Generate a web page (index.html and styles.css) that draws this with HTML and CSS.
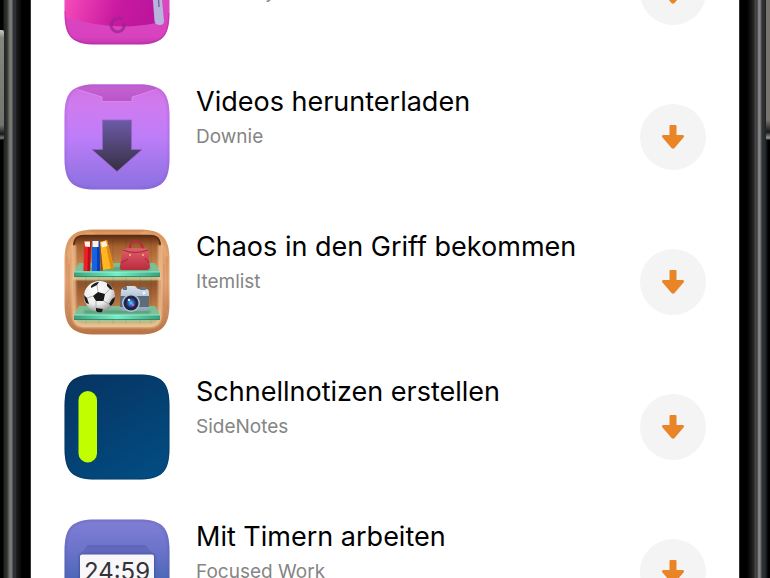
FILE: index.html
```
<!DOCTYPE html>
<html lang="de">
<head>
<meta charset="utf-8">
<meta name="viewport" content="width=device-width, initial-scale=1">
<title>Apps</title>
<link rel="stylesheet" href="styles.css">
</head>
<body>
<svg class="defs" aria-hidden="true">
  <defs>
    <clipPath id="tile"><path d="M.5 32C.5 8 8 .5 32 .5H74C98 .5 105.500 8 105.500 32V74C105.500 98 98 105.500 74 105.500H32C8 105.500 .5 98 .5 74Z"/></clipPath>
    <filter id="soft" x="-30%" y="-30%" width="160%" height="160%"><feGaussianBlur stdDeviation="1"/></filter>
    <filter id="glow" x="-30%" y="-80%" width="160%" height="260%"><feGaussianBlur stdDeviation="3"/></filter>
    <symbol id="arrow" viewBox="0 0 24 26"><path d="M9.500 1H14.500Q15.500 1 15.500 2V11H21.500Q24 11.500 22.500 13.500L13.500 24Q12 25.500 10.500 24L1.500 13.500Q0 11.500 2.500 11H8.500V2Q8.500 1 9.500 1Z" fill="#e98427"/></symbol>
  </defs>
</svg>
<div class="phone">
  <div class="side side-left"><div class="key key-left"></div></div>
  <main class="screen">
    <ul class="apps">
      <li class="app">
        <svg class="icon" viewBox="0 0 106 106" aria-hidden="true">
          <defs>
            <linearGradient id="pink" x1="0" y1=".5" x2="1" y2=".8"><stop offset="0" stop-color="#fb50bd"/><stop offset=".6" stop-color="#c91aa0"/><stop offset="1" stop-color="#ba159c"/></linearGradient>
            <linearGradient id="base" x1="0" y1="0" x2="0" y2="1"><stop offset="0" stop-color="#e04fc4"/><stop offset=".92" stop-color="#d842bf"/><stop offset="1" stop-color="#c336b0"/></linearGradient>
          </defs>
          <g clip-path="url(#tile)">
            <path d="M0 0H106V106H0Z" fill="url(#base)"/>
            <path d="M1 0H90L92 84Q50 93 1 78Z" fill="url(#pink)"/>
            <path d="M88 50H97L100 82Q100 86 96 86Q91 86 90.500 82Z" fill="#b9b4dc"/>
            <path d="M94 50L95 68" stroke="#625b99" stroke-width="1.200"/>
            <path d="M52 80A6.500 6.500 0 1 0 60 85M55 79L57 80" fill="none" stroke="#94258c" stroke-width="3" stroke-linecap="round" opacity=".7"/>
            <path d="M1 72C1 98 8 104.500 32 104.500H74C98 104.500 105 98 105 74" fill="none" stroke="#b32ba6" stroke-width="1.500" opacity=".5"/>
          </g>
        </svg>
        <div class="text"><div class="title"></div><p class="name">CleanMyMac</p></div>
        <button class="get" aria-label="Laden"><svg class="arrow" aria-hidden="true"><use href="#arrow"/></svg></button>
      </li>
      <li class="app">
        <svg class="icon" viewBox="0 0 106 106" aria-hidden="true">
          <defs>
            <linearGradient id="violet" x1="0" y1="0" x2="0" y2="1"><stop offset="0" stop-color="#d070e2"/><stop offset=".2" stop-color="#d07bf0"/><stop offset=".5" stop-color="#bd7df8"/><stop offset="1" stop-color="#8a70e0"/></linearGradient>
            <linearGradient id="flap" x1="0" y1="0" x2="0" y2="1"><stop offset="0" stop-color="#c765d6"/><stop offset="1" stop-color="#b955c6"/></linearGradient>
            <linearGradient id="dark" x1="0" y1="0" x2="0" y2="1"><stop offset="0" stop-color="#6d5ba8"/><stop offset="1" stop-color="#352f42"/></linearGradient>
          </defs>
          <g clip-path="url(#tile)">
            <path d="M0 0H106V106H0Z" fill="url(#violet)"/>
            <path d="M12 5L24 0H82L94 5L68 13V17.500H38V13Z" fill="url(#flap)"/>
            <path d="M12 5L38 13V17.500H68V13L94 5" fill="none" stroke="#df93f2" stroke-width=".7"/>
            <path d="M38.500 36H67.500V65.500H78L53 87.500L28 65.500H38.500Z" fill="url(#dark)" stroke="#965fc9" stroke-width=".8"/>
            <path d="M1 32C1 8 8 1 32 1H74C98 1 105 8 105 32V74C105 98 98 105 74 105H32C8 105 1 98 1 74Z" fill="none" stroke="#8851ba" stroke-width="2" opacity=".35" filter="url(#soft)"/>
          </g>
        </svg>
        <div class="text"><h2 class="title">Videos herunterladen</h2><p class="name">Downie</p></div>
        <button class="get" aria-label="Videos herunterladen: Downie laden"><svg class="arrow" aria-hidden="true"><use href="#arrow"/></svg></button>
      </li>
      <li class="app">
        <svg class="icon" viewBox="0 0 106 106" aria-hidden="true">
          <defs>
            <linearGradient id="wood" x1="0" y1="0" x2="0" y2="1"><stop offset="0" stop-color="#d9955e"/><stop offset=".5" stop-color="#e6a777"/><stop offset="1" stop-color="#b87345"/></linearGradient>
            <linearGradient id="inside" x1="0" y1="0" x2="0" y2="1"><stop offset="0" stop-color="#5a2b13"/><stop offset=".12" stop-color="#a5602f"/><stop offset=".35" stop-color="#c8864f"/><stop offset=".48" stop-color="#e6b681"/><stop offset=".5" stop-color="#8a4f28"/><stop offset=".75" stop-color="#b87441"/><stop offset="1" stop-color="#e8b788"/></linearGradient>
            <linearGradient id="glass" x1="0" y1="0" x2="1" y2="0"><stop offset="0" stop-color="#38a17d"/><stop offset=".5" stop-color="#70f0ca"/><stop offset="1" stop-color="#38a17d"/></linearGradient>
            <linearGradient id="bag" x1="0" y1="0" x2="0" y2="1"><stop offset="0" stop-color="#e0606c"/><stop offset="1" stop-color="#b92b3d"/></linearGradient>
            <radialGradient id="ball" cx=".4" cy=".3" r=".75"><stop offset="0" stop-color="#fff"/><stop offset=".6" stop-color="#ececec"/><stop offset="1" stop-color="#888"/></radialGradient>
            <linearGradient id="metal" x1="0" y1="0" x2="0" y2="1"><stop offset="0" stop-color="#d5e2ef"/><stop offset="1" stop-color="#8fa3b8"/></linearGradient>
            <radialGradient id="lens"><stop offset="0" stop-color="#61d7f7"/><stop offset=".45" stop-color="#2868c4"/><stop offset=".8" stop-color="#31225d"/><stop offset="1" stop-color="#151d2e"/></radialGradient>
          </defs>
          <g clip-path="url(#tile)">
            <path d="M0 0H106V106H0Z" fill="url(#wood)"/>
            <path d="M5 30Q5 5 30 5M102 28Q100 5 76 4" fill="none" stroke="#f1bd91" stroke-width="2" opacity=".6" filter="url(#soft)"/>
            <path d="M3 27V80M5 35V75M103 27V80M100 35V78M20 100H83M28 103H79M25 2H80" stroke="#ad6d40" stroke-width=".7" opacity=".5"/>
            <rect x="9" y="6" width="88" height="92" rx="10" fill="url(#inside)"/>
            <path d="M22 8V95M35 8V95M49 8V95M62 8V95M76 8V95M87 8V95" stroke="#54290f" stroke-width=".6" opacity=".25"/>
            <path d="M10 16V88Q11 97 20 97H86Q95 97 96 88V16" fill="none" stroke="#f4c497" stroke-width="4" filter="url(#soft)" opacity=".8"/>
            <path d="M10 16Q10 6.500 20 6.500H86Q96 6.500 96 16" fill="none" stroke="#5b2c12" stroke-width="1.500"/>
            <path d="M14 39H92V49H14ZM14 82H92V92H14Z" fill="#60f4bd" opacity=".65" filter="url(#glow)"/>
            <path d="M15 34H91L96 43H10ZM15 77H91L96 86H10Z" fill="#76c39c" opacity=".9"/>
            <path d="M20 40H86M20 83H86" stroke="#2b7a58" stroke-width="3" opacity=".5" filter="url(#soft)"/>
            <path d="M10 43H96V47.500H10ZM10 86H96V90.500H10Z" fill="url(#glass)"/>
            <path d="M10 43H96M10 86H96" stroke="#b2f9db" stroke-width=".7"/>
            <path d="M10 47.500H96M10 90.500H96" stroke="#286e4b" stroke-width=".7"/>
            <path d="M20 12L27 13L26 42H19.500Z" fill="#ec2029"/><path d="M24 13H27L26 42H23.500Z" fill="#b60f1b"/>
            <path d="M28 12H35.500L36 42H28Z" fill="#1762df"/><path d="M33 13H35.500L36 42H33Z" fill="#0a3db6"/>
            <path d="M36 13L43 11L50 39L38.500 41Z" fill="#ffb625"/><path d="M36 13L39 41.500L36.500 42Z" fill="#8a4d22"/><path d="M41 12L43 11L50 39L47 41Z" fill="#e28b0b"/>
            <path d="M20.500 12.500H26V18L21 17.500ZM28.500 12H34.500V18H28.500ZM37 13.500L42 12L43.500 17L38 18.500Z" fill="#fff3df"/>
            <path d="M66 27V19Q66 12 72 12Q78 12 79 20V27" fill="none" stroke="#b32d3d" stroke-width="2.200"/>
            <path d="M59 20Q72 18 84 20L86 38Q86 40 83 41H58Q55 41 56 37Z" fill="url(#bag)"/>
            <path d="M59 21Q71 26 84 21M57 34L64 30M85 34L81 29" stroke="#98243a" stroke-width=".9" fill="none"/>
            <circle cx="66" cy="26" r="1" fill="#f5be80"/><circle cx="79" cy="26" r="1" fill="#f5be80"/>
            <circle cx="35.500" cy="67.500" r="15.500" fill="url(#ball)"/>
            <path d="M34 63L41 65L39.500 72H32L29 67ZM27 57Q31 53 35 53L33 56L27 59ZM43 54Q47 56 49 61L46 60L43 57ZM20 66L23 69L25 75L22 74Q20 70 20 66ZM51 68Q51 73 47 77L45 75L48 70ZM32 79L39 80L38 83Q34 84 32 82Z" fill="#1b1b1b"/>
            <path d="M34 63L33 56M41 65L46 60M39.500 72L45 75M32 72L32 79M29 67L23 69" stroke="#999" stroke-width=".7"/>
            <path d="M57 62Q57 59 61 59L63 57H71L74 60H82Q85 60 85 64V79Q85 82 81 82H60Q56 82 56 78Z" fill="url(#metal)"/>
            <path d="M56 67H85V78H56Z" fill="#5d6c7d"/>
            <path d="M59 58H63V61H59ZM76 58H82V61H76Z" fill="#65768b"/>
            <circle cx="67" cy="74" r="9" fill="#b4c4d4"/><circle cx="67" cy="74" r="7.500" fill="#1e2a3f"/><circle cx="67" cy="74" r="6" fill="url(#lens)"/>
            <circle cx="65" cy="71" r="1.300" fill="#bff6ff"/><circle cx="69" cy="76" r="1.300" fill="#ba62e3"/><circle cx="80" cy="64" r="1.500" fill="#f5f8ff"/>
          </g>
        </svg>
        <div class="text"><h2 class="title">Chaos in den Griff bekommen</h2><p class="name">Itemlist</p></div>
        <button class="get" aria-label="Chaos in den Griff bekommen: Itemlist laden"><svg class="arrow" aria-hidden="true"><use href="#arrow"/></svg></button>
      </li>
      <li class="app">
        <svg class="icon" viewBox="0 0 106 106" aria-hidden="true">
          <defs><linearGradient id="navy" x1=".2" y1="0" x2=".8" y2="1"><stop offset="0" stop-color="#063563"/><stop offset="1" stop-color="#024c82"/></linearGradient></defs>
          <g clip-path="url(#tile)">
            <path d="M0 0H106V106H0Z" fill="url(#navy)"/>
            <rect x="14.500" y="17" width="18.500" height="71.500" rx="9.200" fill="#c1ff00"/>
            <path d="M1 32C1 8 8 1 32 1H74C98 1 105 8 105 32V74C105 98 98 105 74 105H32C8 105 1 98 1 74Z" fill="none" stroke="#07315a" opacity=".5"/>
          </g>
        </svg>
        <div class="text"><h2 class="title">Schnellnotizen erstellen</h2><p class="name">SideNotes</p></div>
        <button class="get" aria-label="Schnellnotizen erstellen: SideNotes laden"><svg class="arrow" aria-hidden="true"><use href="#arrow"/></svg></button>
      </li>
      <li class="app">
        <svg class="icon" viewBox="0 0 106 106" aria-hidden="true">
          <defs><linearGradient id="indigo" x1="0" y1="0" x2="0" y2="1"><stop offset="0" stop-color="#827ed6"/><stop offset=".3" stop-color="#6b73c9"/><stop offset=".55" stop-color="#4f68b9"/><stop offset="1" stop-color="#3e559f"/></linearGradient></defs>
          <g clip-path="url(#tile)">
            <path d="M0 0H106V106H0Z" fill="url(#indigo)"/>
            <path d="M23 27H82L91 37H15Z" fill="#4f59a9" opacity=".4"/>
            <path d="M23 27H82" stroke="#565ba9" stroke-width="1"/>
            <rect x="15" y="35" width="76" height="60" rx="3" fill="#3c4a95" opacity=".7" filter="url(#soft)"/>
            <rect x="16" y="35.500" width="74" height="60" rx="2" fill="#f8f8fb"/>
            <text class="clock" x="53" y="61" text-anchor="middle">24:59</text>
            <path d="M1 74V32C1 8 8 1 32 1H74C98 1 105 8 105 32V74" fill="none" stroke="#555aa7" stroke-width="2" opacity=".4" filter="url(#soft)"/>
          </g>
        </svg>
        <div class="text"><h2 class="title">Mit Timern arbeiten</h2><p class="name">Focused Work</p></div>
        <button class="get" aria-label="Mit Timern arbeiten: Focused Work laden"><svg class="arrow" aria-hidden="true"><use href="#arrow"/></svg></button>
      </li>
    </ul>
  </main>
  <div class="side side-right"><div class="key key-right"></div></div>
</div>
</body>
</html>
```
FILE: styles.css
```
* { box-sizing: border-box; }

body {
  margin: 0;
  background: #000;
  color: #000;
  font-family: Inter, "Liberation Sans", sans-serif;
}

.defs {
  position: absolute;
  width: 0;
  height: 0;
}

.phone {
  display: grid;
  grid-template-columns: 31px 1fr 31px;
  height: 100vh;
  overflow: hidden;
}

.side { display: flex; }

.side-left {
  background: linear-gradient(90deg, #000 0 3px, #222 4px, #303132 7px, #4a4b49 8px, #7b7d74 10px, #74766e 12px, #303444 13px, #252830 14px, #3c3d40 15px, #202020 16px, #111 19px, #000 22px 30px, #666 31px);
}

.side-right {
  justify-content: flex-end;
  background: linear-gradient(90deg, #666 0, #000 1px 8px, #151515 12px, #292929 15px, #565656 17px, #222 18px, #808080 19px, #858585 21px, #303334 23px, #272c2f 26px, #111 28px, #000 29px);
}

.key { width: 4px; }

.key-left {
  height: 110px;
  margin-top: 30px;
  border-radius: 0 2px 2px 0;
  background: linear-gradient(180deg, #c8c8c4, #858680 8px, #74756f 95px, #161616 104px, #777 108px, #111);
}

.key-right {
  height: 140px;
  background: linear-gradient(180deg, #77736d, #77736d 120px, #181818 132px, #999 138px, #111);
}

.screen {
  overflow: hidden;
  background: #fff;
}

.apps {
  display: flex;
  flex-direction: column;
  gap: 39px;
  margin: -61px 0 0;
  padding: 0 33px;
  list-style: none;
}

.app {
  display: flex;
  align-items: center;
  gap: 26px;
}

.icon {
  flex: none;
  width: 106px;
  height: 106px;
}

.text {
  flex: 1;
  align-self: flex-start;
}

.title {
  min-height: 36px;
  margin: 0;
  font-size: 27px;
  font-weight: 400;
  line-height: 36px;
}

.name {
  margin: 5px 0 0;
  color: #858585;
  font-size: 19px;
  line-height: 24px;
}

.get {
  display: flex;
  align-items: center;
  justify-content: center;
  width: 66px;
  height: 66px;
  padding: 0;
  border: 0;
  border-radius: 50%;
  background: #f4f4f4;
}

.arrow {
  width: 24px;
  height: 26px;
}

.clock {
  fill: #333338;
  font-size: 24px;
  font-weight: 400;
}
```
